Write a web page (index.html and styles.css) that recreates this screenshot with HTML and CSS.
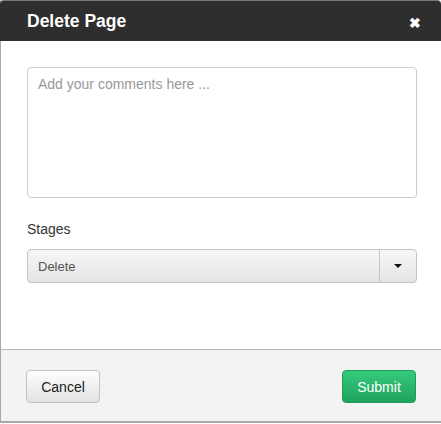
FILE: index.html
```html
<!DOCTYPE html>
<html>
<head>
<meta charset="utf-8">
<link rel="stylesheet" href="styles.css">
</head>
<body>
<div class="modal">
  <div class="modal-header">
    <h1 class="modal-title">Delete Page</h1>
    <span class="close">&#10006;</span>
  </div>
  <div class="modal-body">
    <textarea class="comments" placeholder="Add your comments here ..."></textarea>
    <label class="field-label">Stages</label>
    <div class="select">
      <span class="select-value">Delete</span>
      <span class="select-toggle"><span class="caret"></span></span>
    </div>
  </div>
  <div class="modal-footer">
    <button class="btn btn-default">Cancel</button>
    <button class="btn btn-success">Submit</button>
  </div>
</div>
</body>
</html>
```
FILE: styles.css
```css
html, body {
  margin: 0;
  padding: 0;
  background: #fff;
  overflow: hidden;
}
body {
  font-family: "Liberation Sans", Arial, sans-serif;
  color: #333;
}
.modal {
  width: 440px;
  height: 422px;
  border: 1px solid #a9a9a9;
  border-top: none;
  border-right: none;
  display: flex;
  flex-direction: column;
  box-sizing: content-box;
}
.modal-header {
  height: 41px;
  background: #2e2e2e;
  border-top: 1px solid #777;
  border-radius: 4px 4px 0 0;
  margin-left: -1px;
  padding: 0 20px 0 27px;
  display: flex;
  align-items: center;
  justify-content: space-between;
  box-sizing: border-box;
}
.modal-title {
  margin: 0;
  font-size: 17.5px;
  font-weight: bold;
  color: #fff;
  line-height: 20px;
}
.close {
  color: #fff;
  font-size: 14px;
  font-weight: bold;
  line-height: 14px;
  margin-top: 3px;
}
.modal-body {
  flex: 1;
  padding: 26px 24px 0 26px;
  display: flex;
  flex-direction: column;
}
.comments {
  display: block;
  width: 100%;
  height: 131px;
  box-sizing: border-box;
  border: 1px solid #ccc;
  border-radius: 4px;
  padding: 6px 10px;
  font-family: "Liberation Sans", Arial, sans-serif;
  font-size: 14px;
  line-height: 20px;
  resize: none;
  margin: 0;
}
.comments::placeholder {
  color: #999;
}
.field-label {
  display: block;
  margin-top: 21px;
  font-size: 14px;
  line-height: 20px;
  color: #333;
}
.select {
  margin-top: 10px;
  height: 34px;
  box-sizing: border-box;
  border: 1px solid #c4c4c4;
  border-radius: 4px;
  background: linear-gradient(#f7f7f7, #e4e4e4);
  display: flex;
  align-items: stretch;
}
.select-value {
  flex: 1;
  display: flex;
  align-items: center;
  padding-left: 10px;
  font-size: 13px;
  color: #555;
}
.select-toggle {
  width: 36px;
  border-left: 1px solid #c4c4c4;
  display: flex;
  align-items: center;
  justify-content: center;
}
.caret {
  width: 0;
  height: 0;
  border-left: 4px solid transparent;
  border-right: 4px solid transparent;
  border-top: 4px solid #111;
}
.modal-footer {
  height: 73px;
  background: #f3f3f3;
  border-top: 1px solid #b8b8b8;
  border-bottom: 1px solid #a9a9a9;
  padding: 20px 25px 0 25px;
  box-sizing: border-box;
  display: flex;
  justify-content: space-between;
  align-items: flex-start;
}
.btn {
  width: 74px;
  height: 33px;
  border-radius: 4px;
  font-family: "Liberation Sans", Arial, sans-serif;
  font-size: 14px;
  padding: 0;
  margin: 0;
}
.btn-default {
  background: linear-gradient(#fefefe, #e2e2e2);
  border: 1px solid #c2c2c2;
  color: #222;
}
.btn-success {
  background: linear-gradient(#35cb7d, #22a25e);
  border: 1px solid #1f9a58;
  color: #fff;
}
```
